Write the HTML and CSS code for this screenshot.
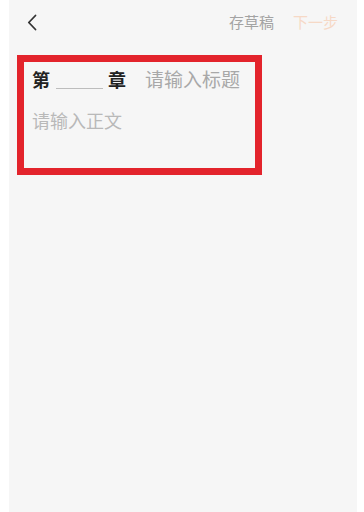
FILE: index.html
```html
<!DOCTYPE html>
<html lang="zh">
<head>
<meta charset="utf-8">
<link rel="stylesheet" href="styles.css">
</head>
<body>
<div class="screen">
  <div class="topbar">
    <svg class="back" width="10" height="17" viewBox="0 0 10 17"><polyline points="8.5,1.5 1.8,8.5 8.5,15.5" fill="none" stroke="#333" stroke-width="1.8" stroke-linecap="round" stroke-linejoin="round"/></svg>
    <div class="actions">
      <span class="draft">存草稿</span>
      <span class="next">下一步</span>
    </div>
  </div>
  <div class="editor">
    <div class="title-row">
      <span class="chap">第</span>
      <span class="num"></span>
      <span class="chap">章</span>
      <span class="title-ph">请输入标题</span>
    </div>
    <div class="body-ph">请输入正文</div>
  </div>
</div>
</body>
</html>
```
FILE: styles.css
```css
html, body {
  margin: 0;
  padding: 0;
  background: #ffffff;
}
body {
  font-family: "Noto Sans CJK SC", "Noto Sans", sans-serif;
}
.screen {
  margin-left: 9px;
  width: 348px;
  height: 512px;
  background: #f6f6f6;
}
.topbar {
  height: 44px;
  display: flex;
  align-items: flex-start;
  justify-content: space-between;
  padding: 0 19px 0 18px;
}
.back {
  margin-top: 14px;
}
.actions {
  display: flex;
  gap: 19px;
  margin-top: 11px;
  font-size: 15px;
  line-height: 22px;
}
.draft {
  color: #a3a3a3;
}
.next {
  color: #f6d9c6;
}
.editor {
  margin: 11px 0 0 8px;
  width: 223px;
  height: 106px;
  border: 7px solid #e3242c;
  padding: 0 0 0 8px;
  box-sizing: content-box;
}
.title-row {
  display: flex;
  align-items: flex-end;
  margin-top: 4px;
  height: 26px;
}
.chap {
  font-size: 18px;
  font-weight: bold;
  color: #222;
  line-height: 26px;
}
.num {
  width: 47px;
  height: 1px;
  background: #bdbdbd;
  margin: 0 5px 3px 6px;
}
.title-ph {
  font-size: 19px;
  color: #a8a8a8;
  line-height: 26px;
  margin-left: 19px;
}
.body-ph {
  margin-top: 16px;
  font-size: 18px;
  line-height: 24px;
  color: #b9b9b9;
}
```
